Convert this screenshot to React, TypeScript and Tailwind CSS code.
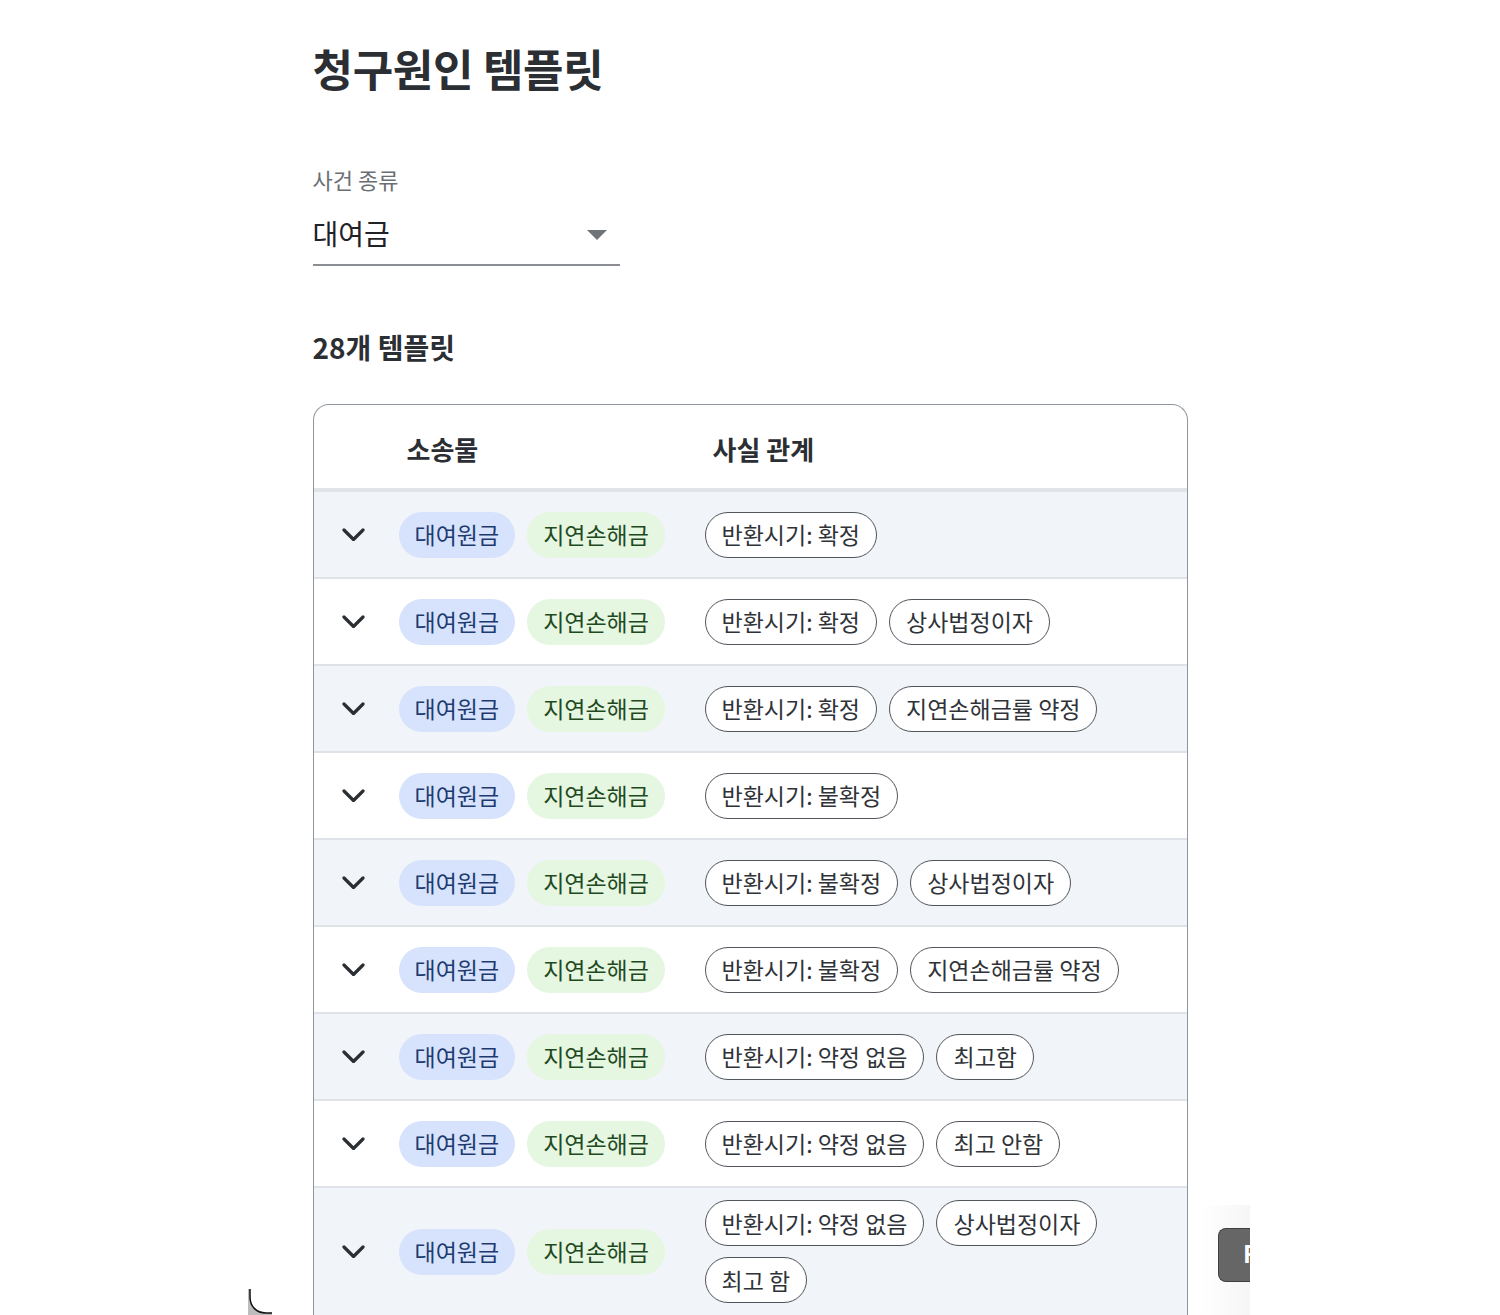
import React from 'react';

type Row = { facts: string[] };

const rows: Row[] = [
  { facts: ['반환시기: 확정'] },
  { facts: ['반환시기: 확정', '상사법정이자'] },
  { facts: ['반환시기: 확정', '지연손해금률 약정'] },
  { facts: ['반환시기: 불확정'] },
  { facts: ['반환시기: 불확정', '상사법정이자'] },
  { facts: ['반환시기: 불확정', '지연손해금률 약정'] },
  { facts: ['반환시기: 약정 없음', '최고함'] },
  { facts: ['반환시기: 약정 없음', '최고 안함'] },
  { facts: ['반환시기: 약정 없음', '상사법정이자', '최고 함'] },
];

const Chevron = () => (
  <svg width="23" height="13" viewBox="0 0 23 13" fill="none">
    <path d="M2 2l9.5 9.5L21 2" stroke="#2b2f33" strokeWidth="3.2" strokeLinecap="round" strokeLinejoin="round" />
  </svg>
);

export default function App() {
  return (
    <div
      className="relative h-[1315px] overflow-hidden bg-white text-[#2b2f33]"
      style={{ fontFamily: '"Noto Sans CJK KR", "Noto Sans", sans-serif' }}
    >
      <div className="mx-auto w-[875px] pt-[40px]">
        <h1 className="text-[44px] font-bold leading-[1.3] tracking-[-0.3px]">청구원인 템플릿</h1>

        <div className="mt-[68px] w-[307px]">
          <div className="text-[22px] leading-[1.3] text-[#6b6f74]">사건 종류</div>
          <div className="mt-[20px] flex items-center justify-between border-b-2 border-[#8a8d91] pb-[11px]">
            <span className="text-[28px] leading-[1.4] text-[#1f2226]">대여금</span>
            <svg width="20" height="10" viewBox="0 0 20 10" className="mr-[13px] mt-[4px]">
              <path d="M0 0h20L10 10z" fill="#6f7378" />
            </svg>
          </div>
        </div>

        <h2 className="mt-[62px] text-[28px] font-bold leading-[1.4]">28개 템플릿</h2>

        <div className="mt-[37px] rounded-t-[16px] border-[1.5px] border-b-0 border-[#8f969e]">
          <div className="flex h-[87px] items-center border-b-4 border-[#e1e3e6] pt-[4px]">
            <div className="w-[85px] shrink-0" />
            <div className="w-[306px] shrink-0 pl-[8px] text-[26px] font-bold">소송물</div>
            <div className="pl-[8px] text-[26px] font-bold">사실 관계</div>
          </div>
          {rows.map((r, i) => (
            <div
              key={i}
              className={`flex min-h-[87px] items-center border-b-2 border-[#dfe3e8] ${i % 2 === 0 ? 'bg-[#f1f4f9]' : 'bg-white'}`}
            >
              <div className="flex w-[85px] shrink-0 justify-center pr-[6px]">
                <Chevron />
              </div>
              <div className="flex w-[306px] shrink-0 gap-[12px]">
                <span className="flex h-[46px] items-center rounded-full bg-[#d7e3fc] px-[16px] text-[23px] text-[#1d3b70]">대여원금</span>
                <span className="flex h-[46px] items-center rounded-full bg-[#e5f6e1] px-[16px] text-[23px] text-[#1f4a1f]">지연손해금</span>
              </div>
              <div className="flex w-[470px] flex-wrap gap-x-[12px] gap-y-[11px] py-[12px]">
                {r.facts.map((f) => (
                  <span
                    key={f}
                    className="flex h-[46px] items-center rounded-full border-[1.5px] border-[#50555b] bg-white px-[16px] text-[23px] text-[#2f3338]"
                  >
                    {f}
                  </span>
                ))}
              </div>
            </div>
          ))}
        </div>
      </div>

      <div className="pointer-events-none absolute bottom-0 left-[1200px] h-[110px] w-[50px] bg-gradient-to-r from-transparent to-[#f6f6f6]" />
      <div className="absolute left-[1218px] top-[1228px] h-[54px] w-[32px] overflow-hidden rounded-l-[8px] border-[1.5px] border-r-0 border-[#3f3f3f] bg-[#666666]">
        <span className="absolute left-[24px] top-[12px] text-[24px] font-bold leading-none text-white">F</span>
      </div>
      <svg className="absolute bottom-0 left-[248px]" width="24" height="26" viewBox="0 0 24 26">
        <path d="M2 0v8c0 9 6 16 16 16h6v2H0V0z" fill="#bdbdbd" />
        <path d="M2 0v8c0 9 6 16 16 16h6" stroke="#111" strokeWidth="1.5" fill="none" />
      </svg>
    </div>
  );
}
